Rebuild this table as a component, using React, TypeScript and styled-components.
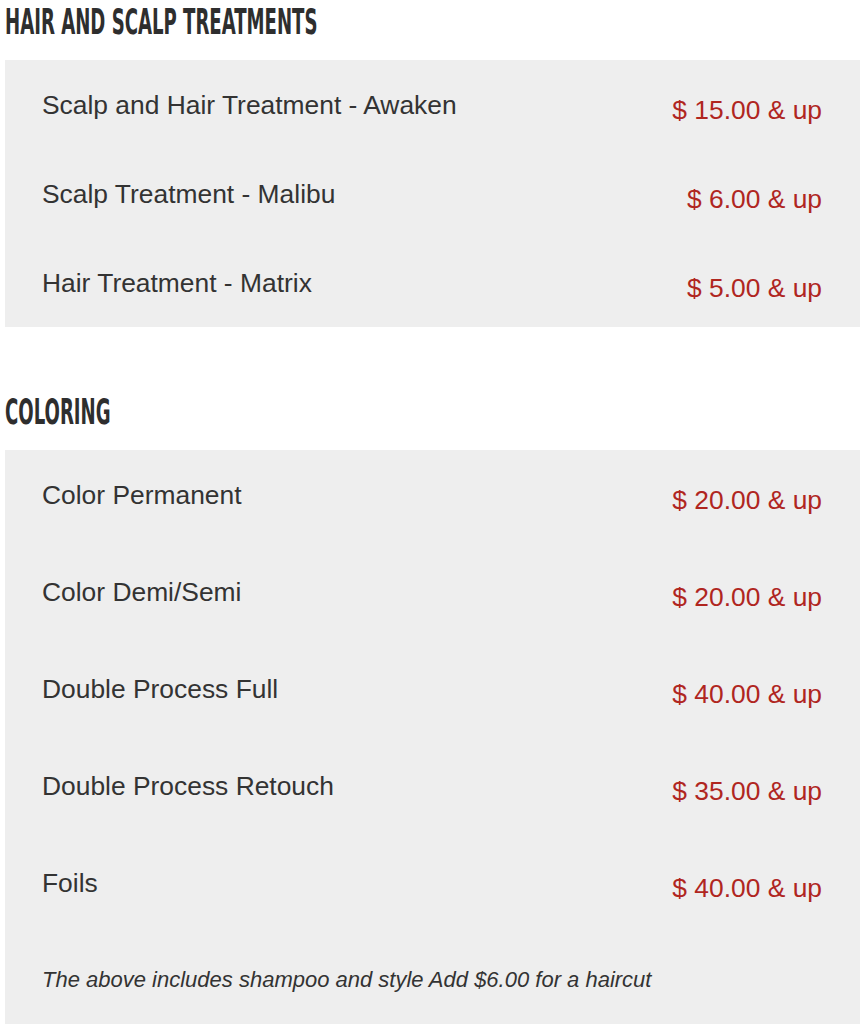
import React from "react";
import styled, { createGlobalStyle } from "styled-components";

const Global = createGlobalStyle`
  html, body { margin: 0; padding: 0; background: #ffffff; }
  body { font-family: "Liberation Sans", Arial, sans-serif; color: #333333; }
`;

const Page = styled.div`
  padding: 0 0 0 5px;
  display: flex;
  flex-direction: column;
`;

const Section = styled.section<{ $gap?: number }>`
  display: flex;
  flex-direction: column;
  margin-bottom: ${(p) => p.$gap ?? 0}px;
`;

const Heading = styled.h2`
  margin: 0;
  height: 60px;
  display: flex;
  align-items: flex-start;
  padding-top: 2px;
  box-sizing: border-box;
  font-family: "DejaVu Sans Condensed", "DejaVu Sans", sans-serif;
  font-stretch: condensed;
  font-weight: 700;
  font-size: 35px;
  line-height: 40px;
  color: #2e2e2e;
  white-space: nowrap;
  transform: scaleX(0.575);
  transform-origin: left top;
`;

const Panel = styled.div<{ $gap: number; $padBottom: number }>`
  background: #eeeeee;
  padding: 30px 38px ${(p) => p.$padBottom}px 37px;
  display: flex;
  flex-direction: column;
  gap: ${(p) => p.$gap}px;
`;

const Row = styled.div`
  height: 35px;
  display: flex;
  justify-content: space-between;
  align-items: flex-start;
  font-size: 26.4px;
  line-height: 30px;
`;

const Name = styled.span`
  color: #333333;
`;

const Price = styled.span`
  color: #b0261f;
  padding-top: 5px;
`;

const Note = styled.p`
  margin: 2px 0 0;
  font-style: italic;
  font-size: 22px;
  line-height: 26px;
  color: #333333;
`;

type Item = { name: string; price: string };

const hair: Item[] = [
  { name: "Scalp and Hair Treatment - Awaken", price: "$ 15.00 & up" },
  { name: "Scalp Treatment - Malibu", price: "$ 6.00 & up" },
  { name: "Hair Treatment - Matrix", price: "$ 5.00 & up" },
];

const coloring: Item[] = [
  { name: "Color Permanent", price: "$ 20.00 & up" },
  { name: "Color Demi/Semi", price: "$ 20.00 & up" },
  { name: "Double Process Full", price: "$ 40.00 & up" },
  { name: "Double Process Retouch", price: "$ 35.00 & up" },
  { name: "Foils", price: "$ 40.00 & up" },
];

export default function App() {
  return (
    <>
      <Global />
      <Page>
        <Section $gap={63}>
          <Heading>HAIR AND SCALP TREATMENTS</Heading>
          <Panel $gap={54} $padBottom={24}>
            {hair.map((it) => (
              <Row key={it.name}>
                <Name>{it.name}</Name>
                <Price>{it.price}</Price>
              </Row>
            ))}
          </Panel>
        </Section>
        <Section>
          <Heading>COLORING</Heading>
          <Panel $gap={62} $padBottom={40}>
            {coloring.map((it) => (
              <Row key={it.name}>
                <Name>{it.name}</Name>
                <Price>{it.price}</Price>
              </Row>
            ))}
            <Note>The above includes shampoo and style Add $6.00 for a haircut</Note>
          </Panel>
        </Section>
      </Page>
    </>
  );
}
